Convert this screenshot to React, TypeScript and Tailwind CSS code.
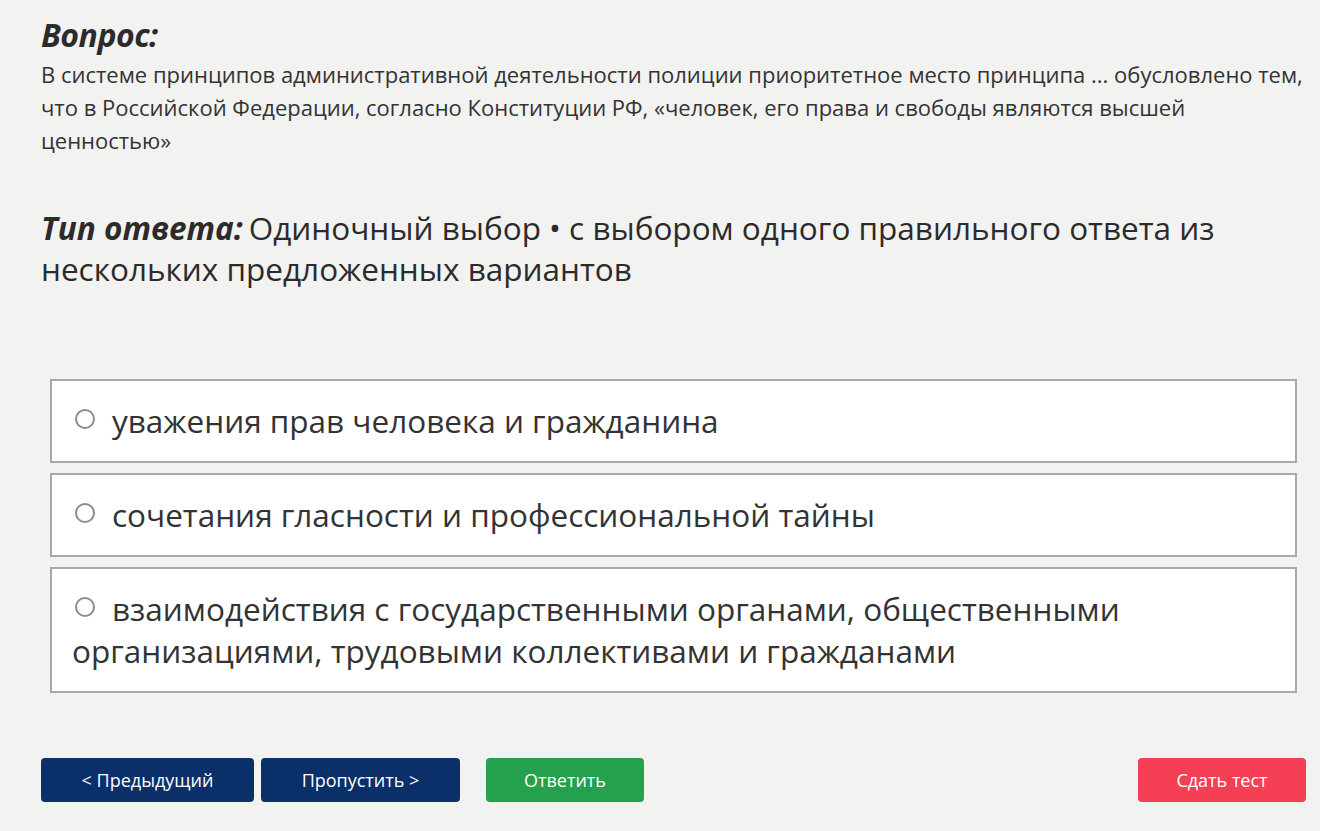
import React, { useState } from "react";

const options = [
  "уважения прав человека и гражданина",
  "сочетания гласности и профессиональной тайны",
  "взаимодействия с государственными органами, общественными организациями, трудовыми коллективами и гражданами",
];

export default function App() {
  const [selected, setSelected] = useState<number | null>(null);

  return (
    <div
      className="min-h-[831px] bg-[#f2f2f1] text-[#2b2b2b] px-[41px] pt-[12px]"
      style={{ fontFamily: '"Open Sans", "Noto Sans", sans-serif' }}
    >
      {/* Question */}
      <h2 className="text-[32px] leading-[46px] font-bold italic tracking-[-0.5px]">Вопрос:</h2>
      <p className="text-[22px] leading-[33px] text-[#333] whitespace-nowrap">
        В системе принципов административной деятельности полиции приоритетное место принципа ... обусловлено тем,
        <br />
        что в Российской Федерации, согласно Конституции РФ, «человек, его права и свободы являются высшей
        <br />
        ценностью»
      </p>

      {/* Answer type */}
      <p className="mt-[50px] text-[31.5px] leading-[41px] pr-[40px]">
        <span className="font-bold italic">Тип ответа:</span>
        <span className="ml-[6px]">
          Одиночный выбор • с выбором одного правильного ответа из нескольких предложенных вариантов
        </span>
      </p>

      {/* Options */}
      <div className="mt-[90px] ml-[9px] mr-[-18px] flex flex-col gap-[10px]">
        {options.map((text, i) => (
          <label
            key={i}
            className="block bg-white border-2 border-[#a8a8a8] px-[20px] py-[19px] text-[31.5px] leading-[42px] text-[#333] cursor-pointer"
          >
            <input
              type="radio"
              name="answer"
              checked={selected === i}
              onChange={() => setSelected(i)}
              className="appearance-none inline-block w-[20px] h-[20px] rounded-full border-2 border-[#8c8c8c] bg-white align-[4px] mr-[17px] ml-[3px] checked:border-[6px] checked:border-[#0b3069]"
            />
            {text}
          </label>
        ))}
      </div>

      {/* Buttons */}
      <div className="mt-[65px] flex items-center">
        <button className="w-[213px] h-[44px] rounded-[4px] bg-[#0b3069] text-white text-[18px]">
          &lt; Предыдущий
        </button>
        <button className="ml-[7px] w-[199px] h-[44px] rounded-[4px] bg-[#0b3069] text-white text-[18px]">
          Пропустить &gt;
        </button>
        <button className="ml-[26px] w-[158px] h-[44px] rounded-[4px] bg-[#25a04c] text-white text-[18px]">
          Ответить
        </button>
        <button className="ml-auto mr-[-27px] w-[168px] h-[44px] rounded-[4px] bg-[#f43f55] text-white text-[18px]">
          Сдать тест
        </button>
      </div>
    </div>
  );
}
